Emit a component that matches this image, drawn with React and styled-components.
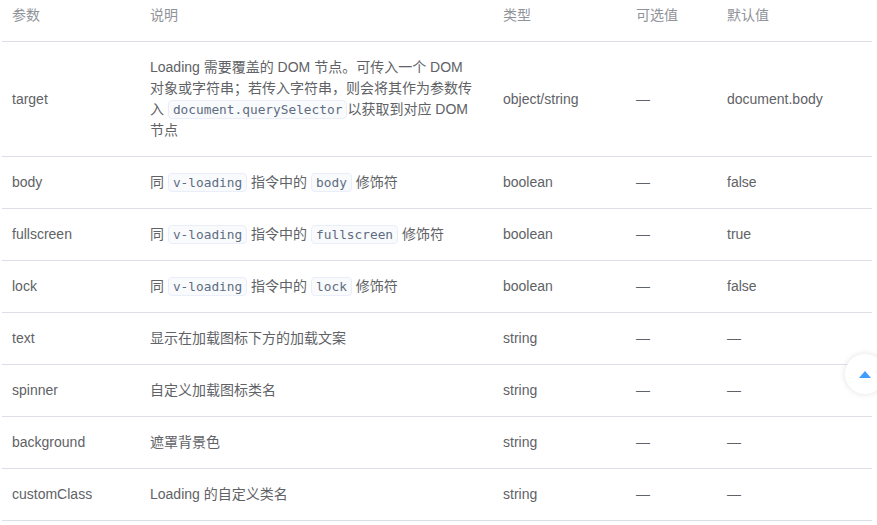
import React from "react";
import styled, { createGlobalStyle } from "styled-components";

const Global = createGlobalStyle`
  html, body { margin: 0; padding: 0; background: #fff; overflow: hidden; }
  body { font-family: "Liberation Sans", "Noto Sans CJK SC", Arial, sans-serif; }
`;

const Page = styled.div`
  padding: 0 5px 0 2px;
`;

const Table = styled.table`
  border-collapse: collapse;
  table-layout: fixed;
  width: 870px;
  margin-top: -10px;
  background: #fff;
  font-size: 14px;
  line-height: 1.5em;
`;

const Th = styled.th`
  text-align: left;
  white-space: nowrap;
  color: #909399;
  font-weight: 400;
  padding: 15px;
  border-bottom: 1px solid #dcdfe6;
  &:first-child { padding-left: 10px; }
`;

const Td = styled.td`
  color: #606266;
  padding: 15px;
  border-bottom: 1px solid #dcdfe6;
  vertical-align: middle;
  &:first-child { padding-left: 10px; }
`;

const Code = styled.code`
  display: inline-block;
  font-family: "DejaVu Sans Mono", "Liberation Mono", monospace;
  font-size: 12.8px;
  color: #5e6d82;
  background: #f9fafc;
  border: 1px solid #eaeefb;
  border-radius: 4px;
  padding: 0 4px;
  height: 17px;
  line-height: 17px;
  vertical-align: middle;
  margin-top: -2px;
`;

const BackTop = styled.button`
  position: fixed;
  left: 845px;
  top: 354px;
  width: 40px;
  height: 40px;
  border-radius: 50%;
  border: none;
  background: #fff;
  box-shadow: 0 0 6px rgba(0, 0, 0, 0.12);
  display: flex;
  align-items: center;
  justify-content: center;
  padding: 0;
  cursor: pointer;
`;

const cols = [133, 353, 133, 91, 160];

const D = "—";

const rows = [
  {
    name: "target",
    desc: (
      <>
        Loading 需要覆盖的 DOM 节点。可传入一个 DOM
        <br />
        对象或字符串；若传入字符串，则会将其作为参数传
        <br />
        入 <Code>document.querySelector</Code>以获取到对应 DOM
        <br />
        节点
      </>
    ),
    type: "object/string",
    opts: D,
    def: "document.body",
  },
  {
    name: "body",
    desc: (
      <>
        同 <Code>v-loading</Code> 指令中的 <Code>body</Code> 修饰符
      </>
    ),
    type: "boolean",
    opts: D,
    def: "false",
  },
  {
    name: "fullscreen",
    desc: (
      <>
        同 <Code>v-loading</Code> 指令中的 <Code>fullscreen</Code> 修饰符
      </>
    ),
    type: "boolean",
    opts: D,
    def: "true",
  },
  {
    name: "lock",
    desc: (
      <>
        同 <Code>v-loading</Code> 指令中的 <Code>lock</Code> 修饰符
      </>
    ),
    type: "boolean",
    opts: D,
    def: "false",
  },
  { name: "text", desc: "显示在加载图标下方的加载文案", type: "string", opts: D, def: D },
  { name: "spinner", desc: "自定义加载图标类名", type: "string", opts: D, def: D },
  { name: "background", desc: "遮罩背景色", type: "string", opts: D, def: D },
  { name: "customClass", desc: "Loading 的自定义类名", type: "string", opts: D, def: D },
];

export default function App() {
  return (
    <Page>
      <Global />
      <Table>
        <colgroup>
          {cols.map((w, i) => (
            <col key={i} style={{ width: w }} />
          ))}
        </colgroup>
        <thead>
          <tr>
            <Th>参数</Th>
            <Th>说明</Th>
            <Th>类型</Th>
            <Th>可选值</Th>
            <Th>默认值</Th>
          </tr>
        </thead>
        <tbody>
          {rows.map((r) => (
            <tr key={r.name}>
              <Td>{r.name}</Td>
              <Td>{r.desc}</Td>
              <Td>{r.type}</Td>
              <Td>{r.opts}</Td>
              <Td>{r.def}</Td>
            </tr>
          ))}
        </tbody>
      </Table>
      <BackTop aria-label="back to top">
        <svg width="12" height="7" viewBox="0 0 12 7">
          <path d="M6 0 L12 7 L0 7 Z" fill="#409eff" />
        </svg>
      </BackTop>
    </Page>
  );
}
